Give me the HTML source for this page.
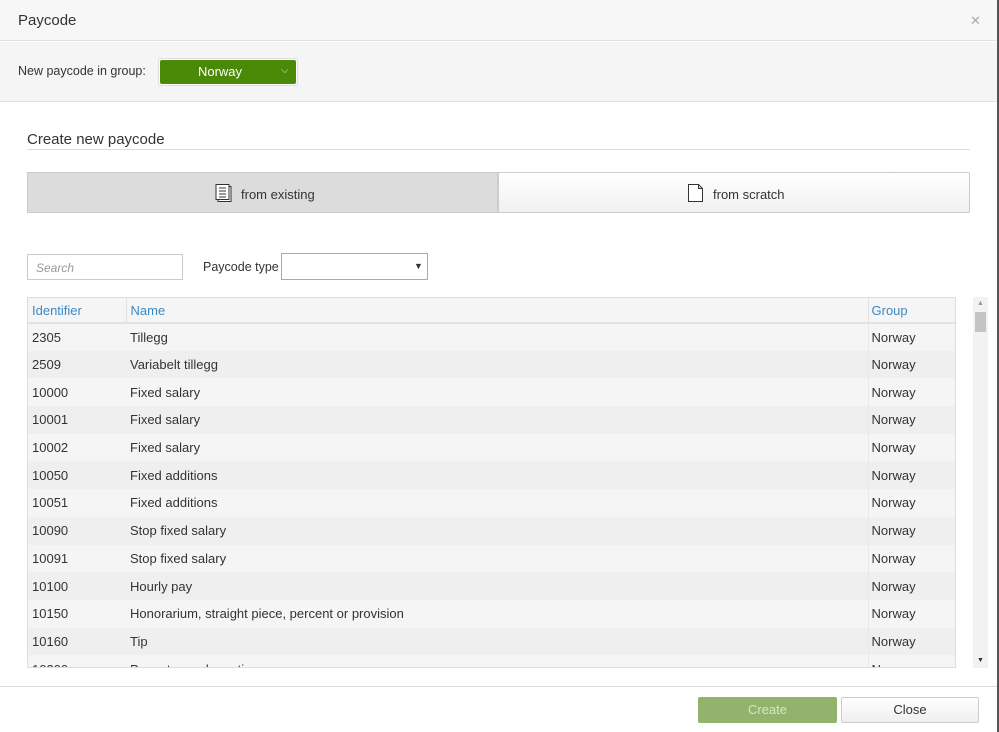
<!DOCTYPE html>
<html><head><style>
*{box-sizing:border-box;margin:0;padding:0}
body{width:999px;height:732px;overflow:hidden;background:#fff;font-family:"Liberation Sans",sans-serif;font-size:13px;color:#333;position:relative}
.abs{position:absolute}
</style></head><body>
<div class="abs" style="left:0;top:0;width:997px;height:41px;background:#f7f7f7;border-bottom:1px solid #e2e2e2"></div>
<div class="abs" style="left:18px;top:12px;font-size:15px;color:#333">Paycode</div>
<div class="abs" style="left:970px;top:13px;font-size:13px;color:#aaa">✕</div>
<div class="abs" style="left:0;top:42px;width:997px;height:60px;background:#f5f5f5;border-bottom:1px solid #e2e2e2"></div>
<div class="abs" style="left:18px;top:64px;font-size:12.5px">New paycode in group:</div>
<div class="abs" style="left:158px;top:58px;width:140px;height:28px;border:1px solid #ddd;border-radius:3px;background:#fff"></div>
<div class="abs" style="left:160px;top:60px;width:136px;height:24px;background:#4a8a06;border-radius:2px;color:#fff;text-align:center;line-height:24px;padding-right:16px">Norway</div>
<div class="abs" style="left:281px;top:65px;color:#cde3b8;font-size:10px">⌵</div>
<div class="abs" style="left:27px;top:131px;font-size:15px">Create new paycode</div>
<div class="abs" style="left:27px;top:149px;width:943px;height:1px;background:#ddd"></div>
<div class="abs" style="left:27px;top:172px;width:471px;height:41px;background:#dcdcdc;border:1px solid #ccc"></div>
<div class="abs" style="left:498px;top:172px;width:472px;height:41px;background:linear-gradient(#fff,#f0f0f0);border:1px solid #ccc;border-radius:0 2px 2px 0"></div>
<svg class="abs" style="left:214px;top:183px" width="20" height="20" viewBox="0 0 20 20"><rect x="4" y="3.5" width="13" height="15" fill="#fff" stroke="#333"/><rect x="2" y="1.5" width="13" height="15" fill="#fff" stroke="#333"/><path d="M5 5h7M5 8h7M5 11h7M5 14h7" stroke="#333"/></svg>
<div class="abs" style="left:241px;top:187px">from existing</div>
<svg class="abs" style="left:687px;top:183px" width="18" height="20" viewBox="0 0 18 20"><path d="M1.5 1.5h10l4 4v13h-14z M11.5 1.5v4h4" fill="#fff" stroke="#333"/></svg>
<div class="abs" style="left:713px;top:187px">from scratch</div>
<div class="abs" style="left:27px;top:254px;width:156px;height:26px;border:1px solid #ccc;padding:6px 8px;color:#999;font-style:italic;font-size:12px">Search</div>
<div class="abs" style="left:203px;top:260px;font-size:12.5px">Paycode type</div>
<div class="abs" style="left:281px;top:253px;width:147px;height:27px;border:1px solid #aaa;background:#fff"></div>
<div class="abs" style="left:414px;top:261px;font-size:9px">▼</div>
<div class="abs" style="left:27px;top:297px;width:929px;height:371px;border:1px solid #ddd;overflow:hidden">
<table style="border-collapse:collapse;width:927px;table-layout:fixed">
<colgroup><col style="width:98px"><col style="width:742px"><col style="width:87px"></colgroup>
<tr style="height:25px;background:#f5f5f5;color:#3a8ac4;border-bottom:2px solid #e2e2e2"><td style="padding-left:4px;border-right:1px solid #e2e2e2">Identifier</td><td style="padding-left:4px;border-right:1px solid #e2e2e2">Name</td><td style="padding-left:3px">Group</td></tr>
<tbody id="b"></tbody>
</table></div>
<div class="abs" style="left:973px;top:297px;width:15px;height:371px;background:#f2f2f2"></div>
<div class="abs" style="left:975px;top:312px;width:11px;height:20px;background:#c4c4c4"></div>
<div class="abs" style="left:977px;top:300px;font-size:7px;color:#999">▲</div>
<div class="abs" style="left:977px;top:657px;font-size:7px;color:#333">▼</div>
<div class="abs" style="left:0;top:686px;width:997px;height:1px;background:#ddd"></div>
<div class="abs" style="left:698px;top:697px;width:139px;height:26px;background:#93b36c;border-radius:2px;color:#d6e6c2;text-align:center;line-height:26px">Create</div>
<div class="abs" style="left:841px;top:697px;width:138px;height:26px;background:linear-gradient(#fff,#eee);border:1px solid #ccc;border-radius:2px;text-align:center;line-height:24px">Close</div>
<div class="abs" style="left:997px;top:0;width:2px;height:732px;background:#555"></div>
<script>
var d=[["2305","Tillegg"],["2509","Variabelt tillegg"],["10000","Fixed salary"],["10001","Fixed salary"],["10002","Fixed salary"],["10050","Fixed additions"],["10051","Fixed additions"],["10090","Stop fixed salary"],["10091","Stop fixed salary"],["10100","Hourly pay"],["10150","Honorarium, straight piece, percent or provision"],["10160","Tip"],["10200","Payout saved overtime"]];
var h="";d.forEach(function(r,i){h+='<tr style="height:27.7px;background:'+(i%2?'#efefef':'#f5f5f5')+'"><td style="padding-left:4px">'+r[0]+'</td><td style="padding-left:4px">'+r[1]+'</td><td style="padding-left:3px;border-left:1px solid #e8e8e8">Norway</td></tr>'});
document.getElementById("b").innerHTML=h;
</script>
</body></html>
